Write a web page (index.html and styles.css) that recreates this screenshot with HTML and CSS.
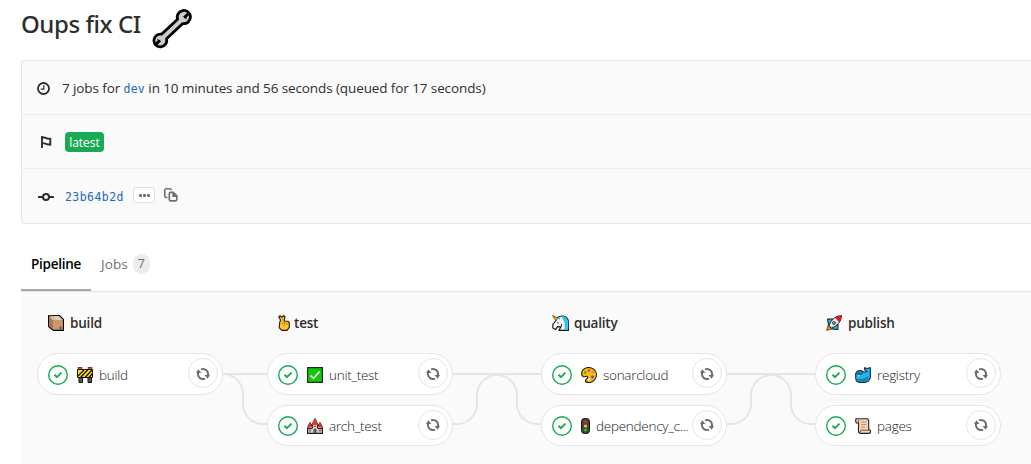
FILE: index.html
```html
<!DOCTYPE html>
<html lang="en">
<head>
<meta charset="utf-8">
<title>Oups fix CI</title>
<link rel="stylesheet" href="styles.css">
</head>
<body>
<svg class="defs" width="0" height="0">
  <symbol id="ok" viewBox="0 0 20 20"><circle cx="10" cy="10" r="9.3" fill="#fff" stroke="#1aaa55" stroke-width="1.4"/><path d="M6.500 9.800l2.400 2.300 4.600-4.500" fill="none" stroke="#1aaa55" stroke-width="2"/></symbol>
  <symbol id="retry" viewBox="0 0 14 14"><g fill="none" stroke="#6e6e6e" stroke-width="2"><path d="M5 2.400A5 5 0 0 1 11.700 8.700"/><path d="M9 11.600A5 5 0 0 1 2.300 5.300"/></g><path d="M8.600 8H14l-2.400 3.700zM5.400 6H0l2.400-3.700z" fill="#6e6e6e"/></symbol>
</svg>
<header class="title">
  <h1>Oups fix CI</h1>
  <svg class="wrench" viewBox="0 0 40 40"><path d="M25.600 10.200A6.600 6.600 0 1 1 30.800 14.600L14.500 29.800A6.400 6.400 0 1 1 9.500 25.200z" fill="#ccc" stroke="#000" stroke-width="2.800" stroke-linejoin="round"/><path d="M36.500 4.500l-3.300 3.300M3.800 35.500L7 32.300" fill="none" stroke="#000" stroke-width="3" stroke-linecap="round"/><path d="M31.500 7.200l1.200 1.600 2 .6M5.300 30.700l2 .6 1.200 1.700" fill="none" stroke="#000" stroke-width="1"/></svg>
</header>
<section class="info">
  <div class="row">
    <svg class="ic clock" viewBox="0 0 12 12"><circle cx="6" cy="6" r="5.100" fill="none" stroke="#2e2e2e" stroke-width="1.700"/><path d="M6.300 3v3.500H3.500" fill="none" stroke="#2e2e2e" stroke-width="1.100"/></svg>
    <p class="summary">7 jobs for <a class="mono ref">dev</a> in 10 minutes and 56 seconds (queued for 17 seconds)</p>
  </div>
  <div class="row">
    <svg class="ic flag" viewBox="0 0 12 14"><path d="M2 1v12M2 2.300l3.200.4 2 .8 3.100.2v6L7 9.300l-2-.9L2 8.300" fill="none" stroke="#2e2e2e" stroke-width="1.900"/></svg>
    <span class="latest">latest</span>
  </div>
  <div class="row">
    <svg class="ic commit" viewBox="0 0 16 10"><circle cx="8" cy="5" r="3" fill="none" stroke="#2e2e2e" stroke-width="2"/><path d="M.8 5h4M11.200 5h4" stroke="#2e2e2e" stroke-width="2" stroke-linecap="round"/></svg>
    <a class="mono sha">23b64b2d</a>
    <span class="more"><i></i><i></i><i></i></span>
    <svg class="copy" viewBox="0 0 14 14"><path d="M3.500 9.500H2.300A1.500 1.500 0 0 1 .8 8V2.300A1.500 1.500 0 0 1 2.300.8h3.500a1.500 1.500 0 0 1 1.500 1.500" fill="none" stroke="#707070" stroke-width="1.600"/><path d="M6.600 4.300h2.700l3.500 3.500v3.700a1.300 1.300 0 0 1-1.300 1.300H6.600a1.300 1.300 0 0 1-1.300-1.300V5.600a1.300 1.300 0 0 1 1.300-1.300z" fill="#fafafa" stroke="#707070" stroke-width="1.700"/><path d="M8.300 4.500v4.500h4.500V7.500l-3-3z" fill="#707070"/></svg>
  </div>
</section>
<nav class="tabs">
  <a class="tab active">Pipeline</a>
  <a class="tab">Jobs<span class="count">7</span></a>
</nav>
<main class="graph">
  <section class="stage">
    <h2><svg class="emoji" viewBox="0 0 16 16"><path d="M.6.8L11.500.6l4 3.900v10.900H5.300L.6 11.400z" fill="#c69a6d" stroke="#000" stroke-width="1.200"/><path d="M1.200 1.400L5 5.300v9.200l-3.800-3.300z" fill="#a77b58"/><path d="M1.500 1.200l9.500-.1 3.900 4H5.200z" fill="#dfc2a1"/><path d="M6 1h3l3.500 4h-3z" fill="#c7d3d8"/><path d="M2 9l2 1.500v2L2 10.700z" fill="#e84545"/><path d="M11 13h3M12.500 11.500v2" stroke="#6b4937"/></svg><span>build</span></h2>
    <div class="job"><svg class="status"><use href="#ok"/></svg><svg class="emoji" viewBox="0 0 16 16"><path d="M2 10h3.500v5.500H2zM11 10h3.500v5.500H11z" fill="#555" stroke="#111"/><path d="M.5 2.500h15v8H.5z" fill="#ffd91c" stroke="#111"/><path d="M1 9l6-6M3.500 10.500l7.500-8M8 10.500l7-7.500M12 10.500l3.500-4" stroke="#111" stroke-width="1.200"/><path d="M1.500 2V.8h3V2M11.500 2V.8h3V2" fill="none" stroke="#9a2520" stroke-width="1.500"/></svg><span class="name">build</span><button class="retry"><svg><use href="#retry"/></svg></button></div>
  </section>
  <svg class="link" width="44" height="74" viewBox="0 0 44 74"><path d="M0 1H44M0 1A20 20 0 0 1 20 21V31A20 20 0 0 0 40 51H44"/></svg>
  <section class="stage">
    <h2><svg class="emoji thin" viewBox="0 0 12 16"><path d="M1.700 7.500L2.500 5 .8 1.800 2 .8 4 2.200 5.500.6 7 1.500 6.200 6l3.800.3 1.300 1.500v4.500L9 15.400H4L1.200 12.800z" fill="#ffc533" stroke="#241a0c" stroke-width="1.100"/><path d="M4 2.500l1.500 3.500M3.500 8.500l2.500-1 1 2-2 1.500M8 7.500v2M9.800 8v1.500" fill="none" stroke="#aa6c0c" stroke-width=".7"/></svg><span>test</span></h2>
    <div class="job"><svg class="status"><use href="#ok"/></svg><svg class="emoji" viewBox="0 0 16 16"><path d="M.6.6h14.800v14.800H.6z" fill="#16c60c" stroke="#16351a" stroke-width="1.200"/><path d="M3.500 8.500l3 3L12.500 4.500" fill="none" stroke="#fff" stroke-width="1.500"/></svg><span class="name">unit_test</span><button class="retry"><svg><use href="#retry"/></svg></button></div>
    <div class="job"><svg class="status"><use href="#ok"/></svg><svg class="emoji" viewBox="0 0 16 16"><path d="M.6 15.400V10l1-2.500L3 5l1.500 3L8 1l3.500 7L13 5l1.500 2.500.9 2.500v5.400z" fill="#ccc" stroke="#222" stroke-width="1.200"/><path d="M.8 9.500L3 4l2 5.500zM4.800 7L8 .5 11.200 7zM11 9.500L13 4l2.200 5.500z" fill="#ef3820"/><path d="M1 10.500h4.500M10.500 10.500H15M5.500 7v3M10.500 7v3" stroke="#333"/><path d="M6.500 15v-3a1.500 1.500 0 0 1 3 0v3z" fill="#76523e"/><path d="M3 11.500v2M13 11.500v2M8 7.500v1.500" stroke="#222"/></svg><span class="name">arch_test</span><button class="retry"><svg><use href="#retry"/></svg></button></div>
  </section>
  <svg class="link" width="88" height="74" viewBox="0 0 88 74"><path d="M0 1H88M0 51H4A20 20 0 0 0 24 31V22A20 20 0 0 1 44 2A20 20 0 0 1 64 22V31A20 20 0 0 0 84 51H88"/></svg>
  <section class="stage">
    <h2><svg class="emoji wide" viewBox="0 0 17 16"><path d="M4 3.500C7 .5 13.500-.5 16.200 5l.2 10.400H7L8.800 12l-3.300-.3L3.600 14.500.8 13V9.500L3.500 6z" fill="#f5f5f5" stroke="#111" stroke-width="1.100"/><path d="M9.500 1.300c4-.5 6.200 2.300 6.200 6v7.500h-3.500c.8-3 1-8.500-1.500-10.500z" fill="#28c4f3"/><path d="M.5.5L5.500 3 4 6z" fill="#ffb51b" stroke="#654211" stroke-width=".8"/><path d="M5.500 3l3-1.300L7.500 5z" fill="#28c4f3"/><path d="M6 7v1.400M9.500 9c.3 1.500-.2 2.300-1 3" fill="none" stroke="#111"/></svg><span>quality</span></h2>
    <div class="job"><svg class="status"><use href="#ok"/></svg><svg class="emoji" viewBox="0 0 16 16"><path d="M4.500 14.500c2.500 2 7 1.200 9.300-2 2.500-3.500 2-7.500-.5-9.800C9.500-.5 4-.2 1.500 3.500c-1.200 2-1.200 5 .5 6 2 1 3.500-1.200 4.500.2 1 1.600-2.700 2.800-2 4.800z" fill="#ffb51b" stroke="#211808" stroke-width="1.100"/><circle cx="8" cy="3.500" r="1.200" fill="#e63b2e"/><circle cx="4.300" cy="5.500" r="1.300" fill="#16c60c"/><circle cx="12" cy="5" r="1.200" fill="#f78222"/><circle cx="11.500" cy="10" r="1.400" fill="#2864e0"/><circle cx="8" cy="12.500" r="1.100" fill="#fff"/></svg><span class="name">sonarcloud</span><button class="retry"><svg><use href="#retry"/></svg></button></div>
    <div class="job"><svg class="status"><use href="#ok"/></svg><svg class="emoji light" viewBox="0 0 9 16"><rect x=".5" y=".5" width="8" height="15" rx="3" fill="#444" stroke="#111"/><circle cx="4.500" cy="4" r="1.600" fill="#e02a17"/><circle cx="4.500" cy="8" r="1.600" fill="#ffc914"/><circle cx="4.500" cy="12" r="1.600" fill="#16c60c"/></svg><span class="name">dependency_c...</span><button class="retry"><svg><use href="#retry"/></svg></button></div>
  </section>
  <svg class="link" width="88" height="74" viewBox="0 0 88 74"><path d="M0 1H88M0 51H4A20 20 0 0 0 24 31V22A20 20 0 0 1 44 2A20 20 0 0 1 64 22V31A20 20 0 0 0 84 51H88"/></svg>
  <section class="stage">
    <h2><svg class="emoji" viewBox="0 0 16 16"><path d="M1.500 4H7l5 5v5.500L6 14l-3.500-4z" fill="#27baf0" stroke="#111"/><path d="M.6 15.300L2 10.500l4 3.500z" fill="#ff8c1a" stroke="#752c0c" stroke-width=".8"/><path d="M3 10.500C5 5 9 1 15.400.6 15.200 7 11 11 5.500 13.200z" fill="#e8eef0" stroke="#111"/><path d="M9 2.500C11 1.300 13 .8 15.200.7c0 2.700-.9 5-2.200 6.500z" fill="#e81224"/><circle cx="8" cy="8" r="1.500" fill="#8b9ba3" stroke="#333" stroke-width=".8"/></svg><span>publish</span></h2>
    <div class="job"><svg class="status"><use href="#ok"/></svg><svg class="emoji" viewBox="0 0 16 16"><path d="M.7 11V6.500L2.500 4 6 3.500l3.500 1.700 2.300-.6L9.600 2.800 9.500.8l2.500.7L15.300.7l.1 10L13.500 14 10 15.400H4L1.300 13.800z" fill="#27b4ee" stroke="#102c38" stroke-width="1.100"/><path d="M1.500 12l7-.3 5-3v3.500L10 14.800H4.500z" fill="#1685b5"/><path d="M1.500 7h6M4 4v2.500M7 4v2.500" stroke="#123643"/><path d="M3 8.800h1.300" stroke="#fff"/></svg><span class="name">registry</span><button class="retry"><svg><use href="#retry"/></svg></button></div>
    <div class="job"><svg class="status"><use href="#ok"/></svg><svg class="emoji" viewBox="0 0 16 16"><path d="M1 .7h11.500l1.200 1.600v9.600l1.700.3v2.300l-1 .9H5L3.500 14V5H1.300L.6 3z" fill="#f3d3b8" stroke="#2b211b" stroke-width="1.100"/><path d="M6 4h5.500M6 6.500h5.500M6 9h4" stroke="#bd947b"/><path d="M3.500 5V2M5 14.500l1-2.300h7.500" fill="none" stroke="#755744"/></svg><span class="name">pages</span><button class="retry"><svg><use href="#retry"/></svg></button></div>
  </section>
</main>
</body>
</html>
```
FILE: styles.css
```css
* { box-sizing: border-box; }
body {
  margin: 0;
  height: 464px;
  overflow: hidden;
  padding-left: 21px;
  background: #fff;
  color: #2e2e2e;
  font: 14px/20px "Open Sans", "Noto Sans", sans-serif;
}
svg { display: block; flex: none; }
.defs { position: absolute; }
h1, h2, p { margin: 0; }
.title { display: flex; height: 60px; align-items: flex-start; }
h1 { width: 131px; padding-top: 9px; font-family: "Noto Sans", sans-serif; font-size: 24px; line-height: 30px; font-weight: 500; letter-spacing: -0.45px; white-space: nowrap; }
.wrench { width: 40px; height: 40px; margin-top: 9px; }
.info { height: 164px; border: 1px solid #e5e5e5; border-right: 0; border-radius: 4px 0 0 4px; background: #fafafa; }
.row { display: flex; align-items: center; height: 54px; padding-left: 15px; }
.row:first-child { height: 53px; padding-top: 1px; }
.row + .row { border-top: 1px solid #eee; }
.clock { width: 13px; height: 13px; margin-right: 12px; }
.summary { font-size: 13.500px; letter-spacing: -0.1px; white-space: pre; }
.mono { font-family: "DejaVu Sans Mono", monospace; color: #1b69b6; }
.ref { font-size: 11.500px; letter-spacing: 0.2px; }
.flag { width: 12px; height: 14px; margin: 0 13px 0 3px; }
.latest { width: 39px; height: 20px; border-radius: 4px; background: #1aaa55; color: #fff; font-size: 12px; line-height: 21px; text-align: center; }
.commit { width: 16px; height: 10px; margin: 3px 12px 0 1px; }
.sha { margin-top: 2px; margin-left: -1px; font-size: 11.500px; letter-spacing: 0.45px; }
.more { display: flex; align-items: center; justify-content: center; gap: 1px; width: 22px; height: 16px; margin: -1px 9px 0 9px; border: 1px solid #e1e1e1; border-radius: 3px; background: #fff; }
.more i { width: 3px; height: 3px; border-radius: 1px; background: #707070; }
.copy { width: 14px; height: 14px; margin-top: -2px; }
.tabs { display: flex; height: 68px; padding-top: 13px; border-bottom: 1px solid #e5e5e5; }
.tab { display: flex; align-items: center; height: 54px; padding: 0 10px; color: #707070; font-size: 13.500px; letter-spacing: 0.1px; }
.active { width: 70px; border-bottom: 2px solid #a7a7a7; padding-top: 2px; color: #000; font-weight: 600; letter-spacing: -0.25px; }
.count { width: 17px; height: 20px; margin-left: 5px; border-radius: 10px; background: #ececec; font-size: 12.500px; text-align: center; }
.graph { display: flex; height: 172px; padding: 21px 0 0 16px; background: #fafafa; }
.stage { flex: none; width: 186px; }
.stage h2 { display: flex; align-items: center; height: 20px; margin-bottom: 20px; padding-left: 11px; font-size: 13.500px; font-weight: 600; letter-spacing: -0.2px; }
.emoji { width: 16px; height: 16px; margin-right: 6px; }
.thin { width: 12px; margin-right: 4px; }
.wide { width: 17px; margin-right: 5px; }
.light { width: 9px; }
.job { display: flex; align-items: center; height: 42px; padding: 0 4px 0 10px; border: 1px solid #e5e5e5; border-radius: 21px; background: #fff; }
.job + .job { height: 41px; margin-top: 10px; }
.status { width: 20px; height: 20px; margin: 2px 9px 0 0; }
.job .emoji { margin-top: 1px; }
.name { flex: 1; margin-top: 2px; white-space: nowrap; font-size: 13.500px; font-weight: 300; letter-spacing: -0.27px; color: #222; }
.job + .job .status { margin-top: 0; }
.job + .job .name { margin-top: 1px; }
.job + .job .emoji { margin-top: 0; }
.retry { flex: none; display: flex; align-items: center; justify-content: center; width: 30px; height: 30px; margin-top: -2px; padding: 0; border: 1px solid #e5e5e5; border-radius: 50%; background: #fff; }
.retry svg { width: 14px; height: 14px; margin-top: 1px; }
.link { margin-top: 60px; }
.link path { fill: none; stroke: #e5e5e5; stroke-width: 2; }
```
